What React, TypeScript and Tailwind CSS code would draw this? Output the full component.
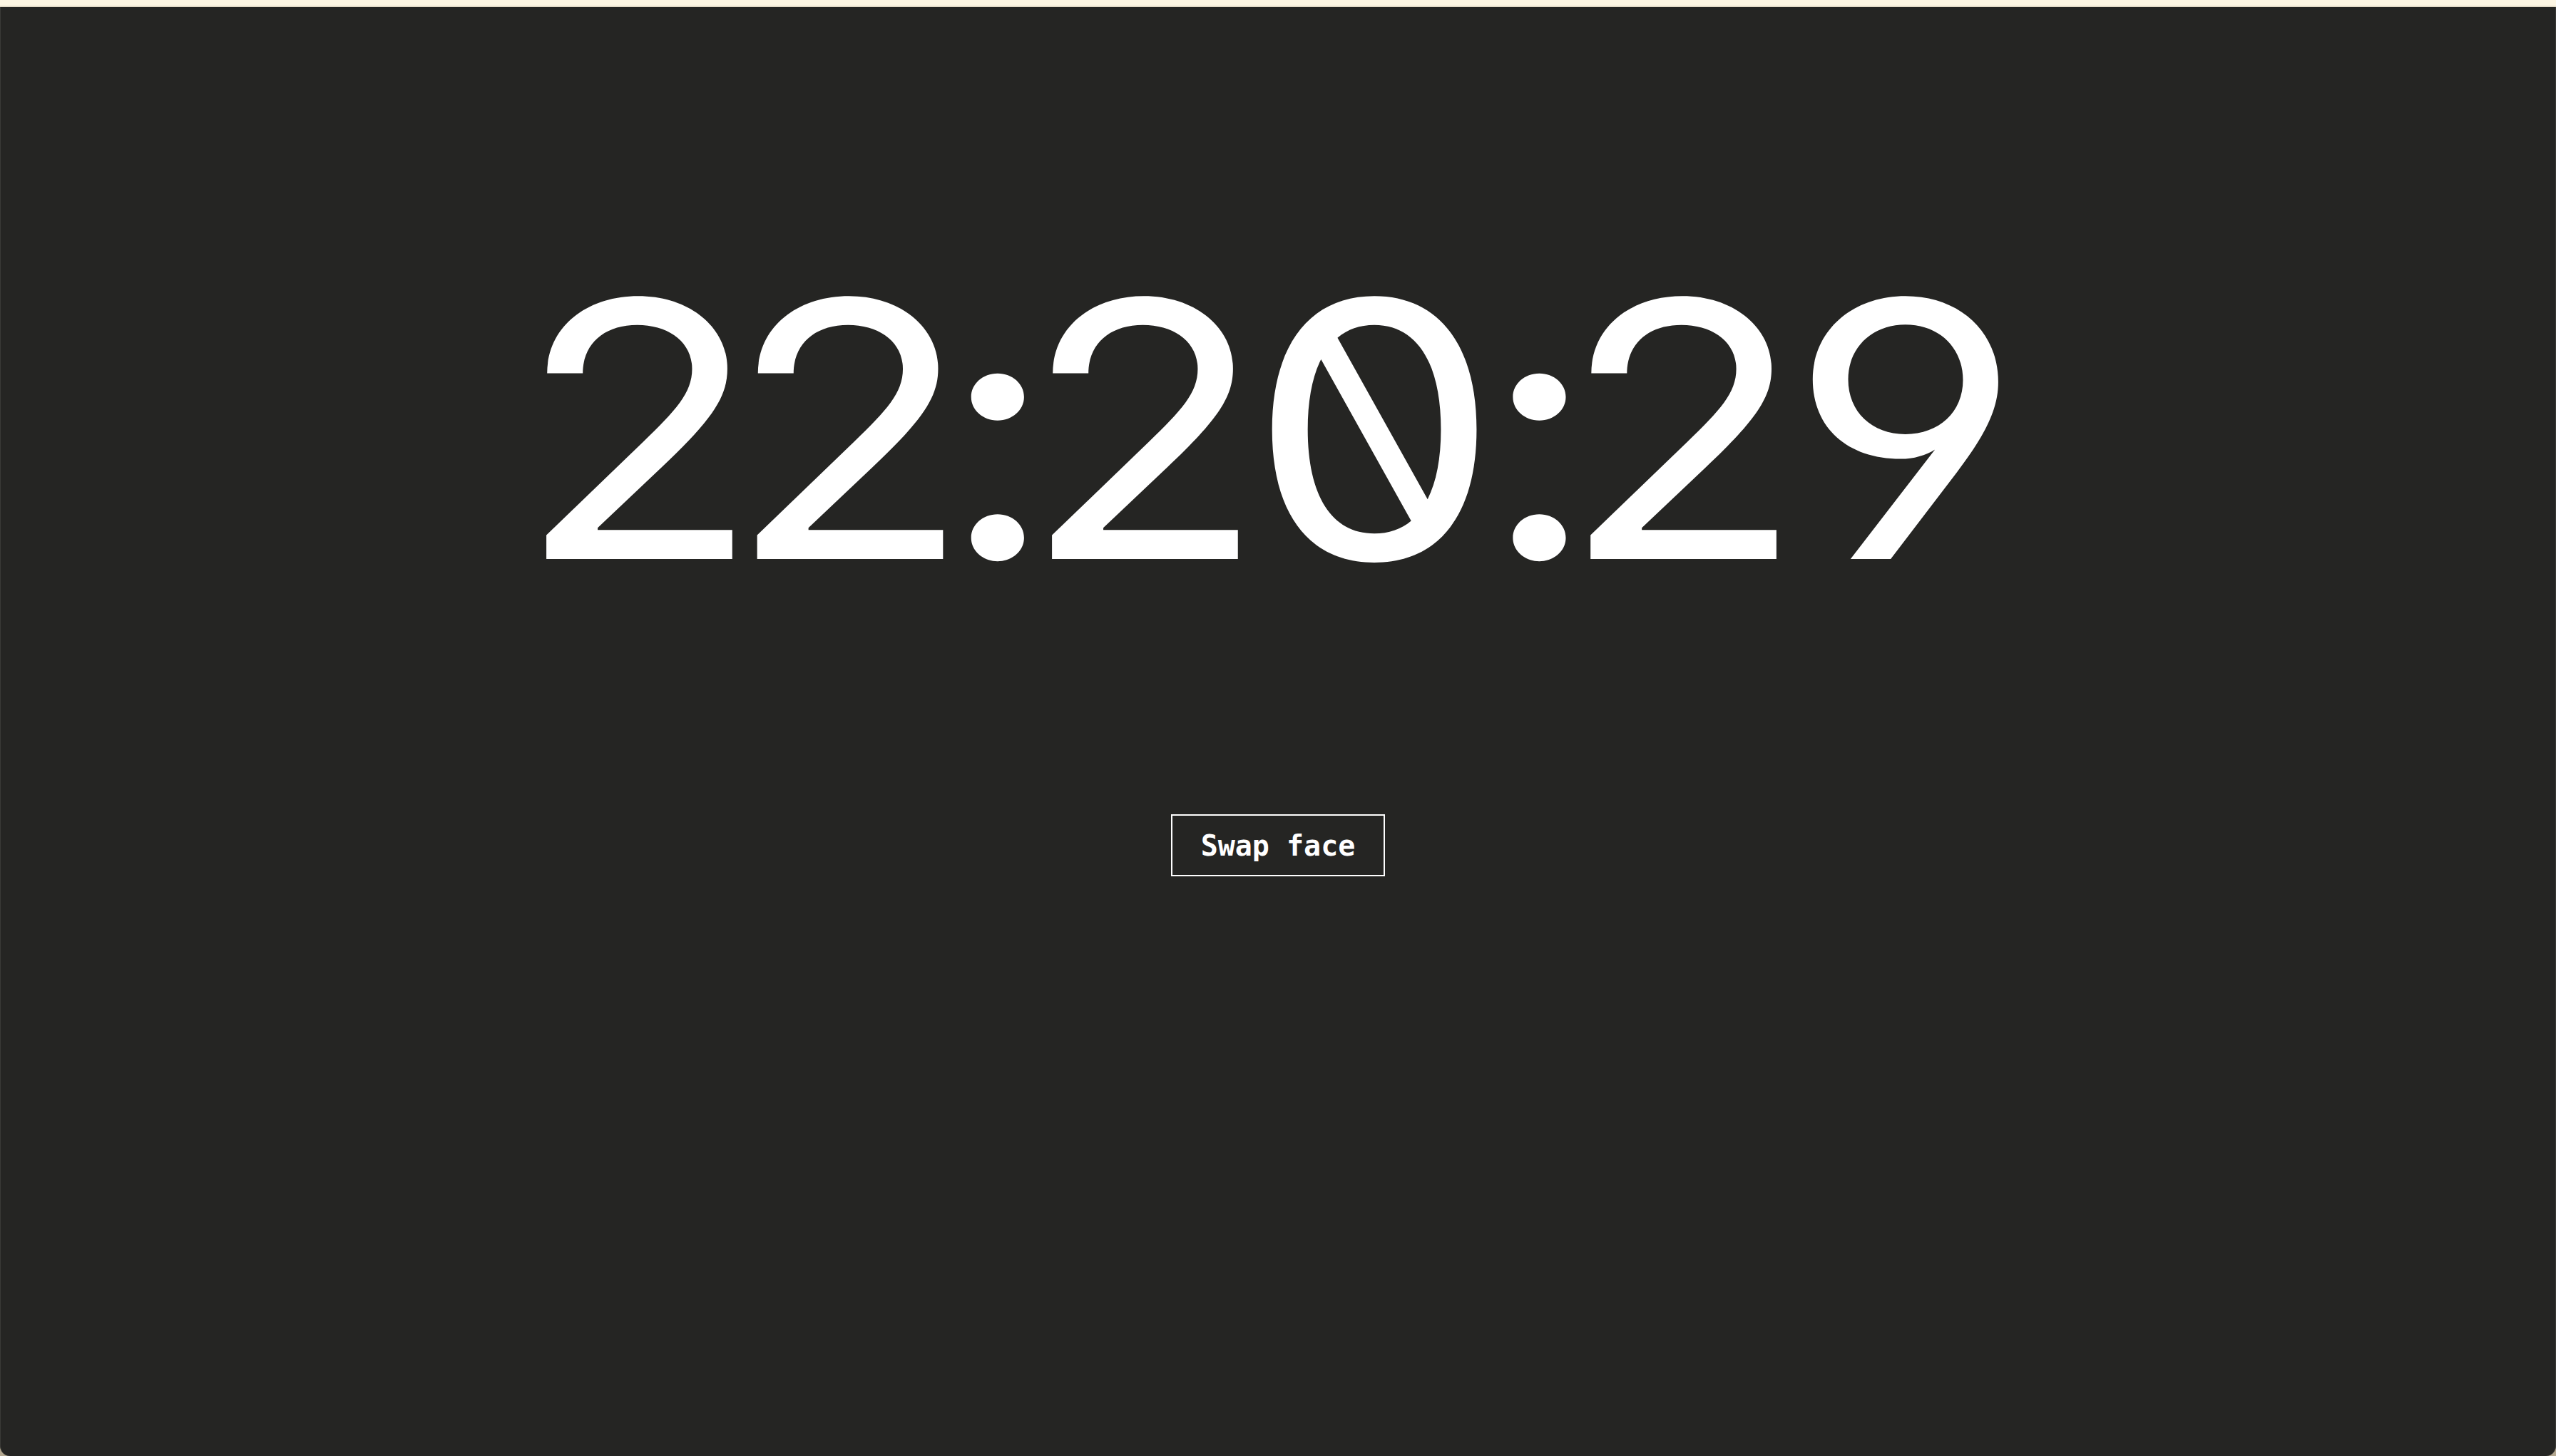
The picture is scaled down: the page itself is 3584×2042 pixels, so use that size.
import { useState } from 'react';

// per-glyph nudges so the face sits like the original clock
const glyphs = [
    { ch: "2", cls: "" },
    { ch: "2", cls: "ml-[-4px]" },
    { ch: ":", cls: "ml-[11px] mr-[13px]" },
    { ch: "2", cls: "" },
    // slash in this face leans the other way, so flip it
    { ch: "0", cls: "inline-block -scale-x-100 translate-x-[0.115em] ml-[19px]" },
    { ch: ":", cls: "ml-[33px] mr-[9px]" },
    { ch: "2", cls: "" },
    { ch: "9", cls: "ml-[10px]" },
];

export default function App() {
    const [face, setFace] = useState(0);

    return (
        <div className="h-[2042px] w-full bg-[#b3a790] flex flex-col overflow-hidden">
            <div className="h-[8px] bg-[#fdf6e3] shrink-0" />
            <div className="h-[2px] bg-[#e4dcc8] shrink-0" />
            <main className="flex-1 flex flex-col items-center bg-[#252523] border-x border-[#3a3a37] rounded-b-[14px] pt-[343px]">
                <h1
                    className="text-white text-[500px] leading-none font-normal [font-feature-settings:'zero','tnum','cv04'] tracking-[-0.115em] scale-x-[1.125] pr-[72px] select-none whitespace-nowrap"
                    style={{ fontFamily: "Inter, 'Noto Sans', sans-serif" }}
                >
                    {glyphs.map((g, i) => (
                        <span key={i} className={g.cls}>{g.ch}</span>
                    ))}
                </h1>

                <button
                    onClick={() => setFace((face + 1) % 2)}
                    className="mt-[289px] w-[300px] h-[87px] border-2 border-white text-white text-[40px] font-bold flex items-center justify-center"
                    style={{ fontFamily: "'DejaVu Sans Mono', 'Liberation Mono', monospace" }}
                >
                    Swap face
                </button>
            </main>
        </div>
    );
}
